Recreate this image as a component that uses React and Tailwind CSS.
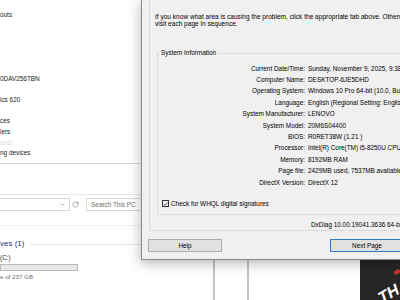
import React from 'react';
import { ChevronDown, RotateCw } from 'lucide-react';

const deviceRows = [
  'outs', '', '', '', '', '', '0DAV256TBN', '', 'ics 620', '', 'ces', 'lers', 'faint', 'ng devices',
];

const info = [
  ['Current Date/Time:', 'Sunday, November 9, 2025, 9:38:12 PM'],
  ['Computer Name:', 'DESKTOP-6JE5DHD'],
  ['Operating System:', 'Windows 10 Pro 64-bit (10.0, Build 19045)'],
  ['Language:', 'English (Regional Setting: English)'],
  ['System Manufacturer:', 'LENOVO'],
  ['System Model:', '20M6S04400'],
  ['BIOS:', 'R0RET38W (1.21 )'],
  ['Processor:', 'Intel(R) Core(TM) i5-8250U CPU @ 1.60GHz (8 CPUs)'],
  ['Memory:', '8192MB RAM'],
  ['Page file:', '2429MB used, 7537MB available'],
  ['DirectX Version:', 'DirectX 12'],
];

const DeviceManager = () => (
  <div className="absolute left-0 top-0 w-[150px] h-[163px] bg-white">
    <div className="flex flex-col pt-[9.7px] text-[6.4px] text-[#1a1a1a]">
      {deviceRows.map((row, i) => (
        <div key={i} className="h-[10.67px] leading-[10.67px] whitespace-nowrap">
          {row === 'faint' ? <span className="text-[#e2e2e2]">ards</span> : row}
        </div>
      ))}
    </div>
  </div>
);

const Explorer = () => (
  <div className="absolute left-0 top-[163px] w-[215px] h-[140px] bg-white border-t border-r-2 border-t-[#d4d4d4] border-r-[#c4c4c4]">
    <div className="h-[31px] border-b border-[#ebebeb]" />
    <div className="mt-[3px] flex h-[13px] items-stretch">
      <div className="-ml-[1px] w-[73px] border border-[#d9d9d9] flex items-center justify-end pr-[3px]">
        <ChevronDown size={7} strokeWidth={1.5} className="text-[#555]" />
      </div>
      <div className="w-[11px] flex items-center justify-center">
        <RotateCw size={7} strokeWidth={1.5} className="text-[#555]" />
      </div>
      <div className="ml-[5px] w-[130px] border border-[#d9d9d9] flex items-center pl-[4px] text-[6.4px] text-[#6d6d6d] whitespace-nowrap">
        Search This PC
      </div>
    </div>
    <div className="mt-[14px] border-t border-[#efefef]" />
    <div className="mt-[13px] flex items-center h-[10px]">
      <span className="text-[8px] leading-[10px] text-[#1e3287] whitespace-nowrap">ves (1)</span>
      <div className="ml-[6px] flex-1 border-t border-[#e5e5e5]" />
    </div>
    <div className="mt-[5px] text-[6.4px] leading-[8px] text-[#1a1a1a]">(C:)</div>
    <div className="mt-[2px] w-[78px] h-[7px] bg-[#e6e6e6] border border-[#bcbcbc]" />
    <div className="mt-[2px] text-[6.2px] leading-[8px] text-[#6d6d6d] whitespace-nowrap">e of 237 GB</div>
  </div>
);

const BackWindow = () => (
  <div className="absolute left-[247px] top-[150px] w-[113px] h-[150px] bg-white border-l-2 border-[#c4c4c4]" />
);

const Wallpaper = () => (
  <div className="absolute left-[360px] top-[256px] w-[40px] h-[44px] bg-[#262626] overflow-hidden">
    <div className="absolute left-[34px] top-[14px] w-[6px] h-[4px] bg-[#c0392b] rotate-[-30deg]" />
    <div className="absolute left-[18px] top-[30px] text-white font-black italic text-[16px] leading-[16px] rotate-[-30deg]">
      TH
    </div>
  </div>
);

const CheckBox = () => (
  <div className="w-[7px] h-[7px] border border-[#333] bg-white flex items-center justify-center">
    <svg width="6" height="6" viewBox="0 0 6 6">
      <path d="M0.8 3 L2.4 4.6 L5.2 1.2" fill="none" stroke="#111" strokeWidth="0.9" />
    </svg>
  </div>
);

const DxDiag = () => (
  <div className="absolute left-[141px] top-0 w-[300px] h-[260px] bg-[#f0f0f0] border-l border-b border-[#8a8a8a] shadow-[0_3px_12px_rgba(0,0,0,0.3)] flex flex-col text-[#000]">
    <div className="ml-[7px] h-[231px] border-l border-r border-b border-[#d9d9d9] flex flex-col">
      <div className="h-[36px] pt-[13px] pl-[5px] text-[6.55px] leading-[7.3px] whitespace-nowrap">
        <p>If you know what area is causing the problem, click the appropriate tab above.  Otherwise, use the "Next Page" button below to</p>
        <p>visit each page in sequence.</p>
      </div>
      <fieldset className="mt-[13px] ml-[7px] mr-[8px] border border-[#dcdcdc] pb-[6px]">
        <legend className="ml-[1px] px-[2px] text-[6.4px] leading-[8px]">System Information</legend>
        <div className="pt-[5.5px] grid grid-cols-[147px_1fr] gap-x-[3px] text-[6.4px] leading-[11.4px]">
          {info.map(([label, value]) => (
            <React.Fragment key={label}>
              <div className="text-right whitespace-nowrap">{label}</div>
              <div className="whitespace-nowrap">{value}</div>
            </React.Fragment>
          ))}
        </div>
        <div className="mt-[12px] pl-[4px] flex items-center gap-[2px] h-[8px] text-[6.4px] leading-[8px]">
          <CheckBox />
          <span className="whitespace-nowrap">Check for WHQL digital signatures</span>
        </div>
      </fieldset>
      <div className="mt-[6px] pl-[161px] text-[6.4px] leading-[8px] whitespace-nowrap">DxDiag 10.00.19041.3636 64-bit Unicode</div>
    </div>
    <div className="mt-[8px] flex h-[13px] text-[6.4px]">
      <button className="ml-[6px] w-[74px] bg-[#e1e1e1] border border-[#adadad] leading-[11px]">Help</button>
      <button className="ml-[108px] w-[74px] bg-[#e1e1e1] border border-[#2f7ac4] leading-[11px]">Next Page</button>
    </div>
  </div>
);

export default function App() {
  return (
    <div className="relative w-[400px] h-[300px] overflow-hidden bg-white font-['Liberation_Sans',Arial,sans-serif]">
      <DeviceManager />
      <BackWindow />
      <Wallpaper />
      <Explorer />
      <DxDiag />
    </div>
  );
}
